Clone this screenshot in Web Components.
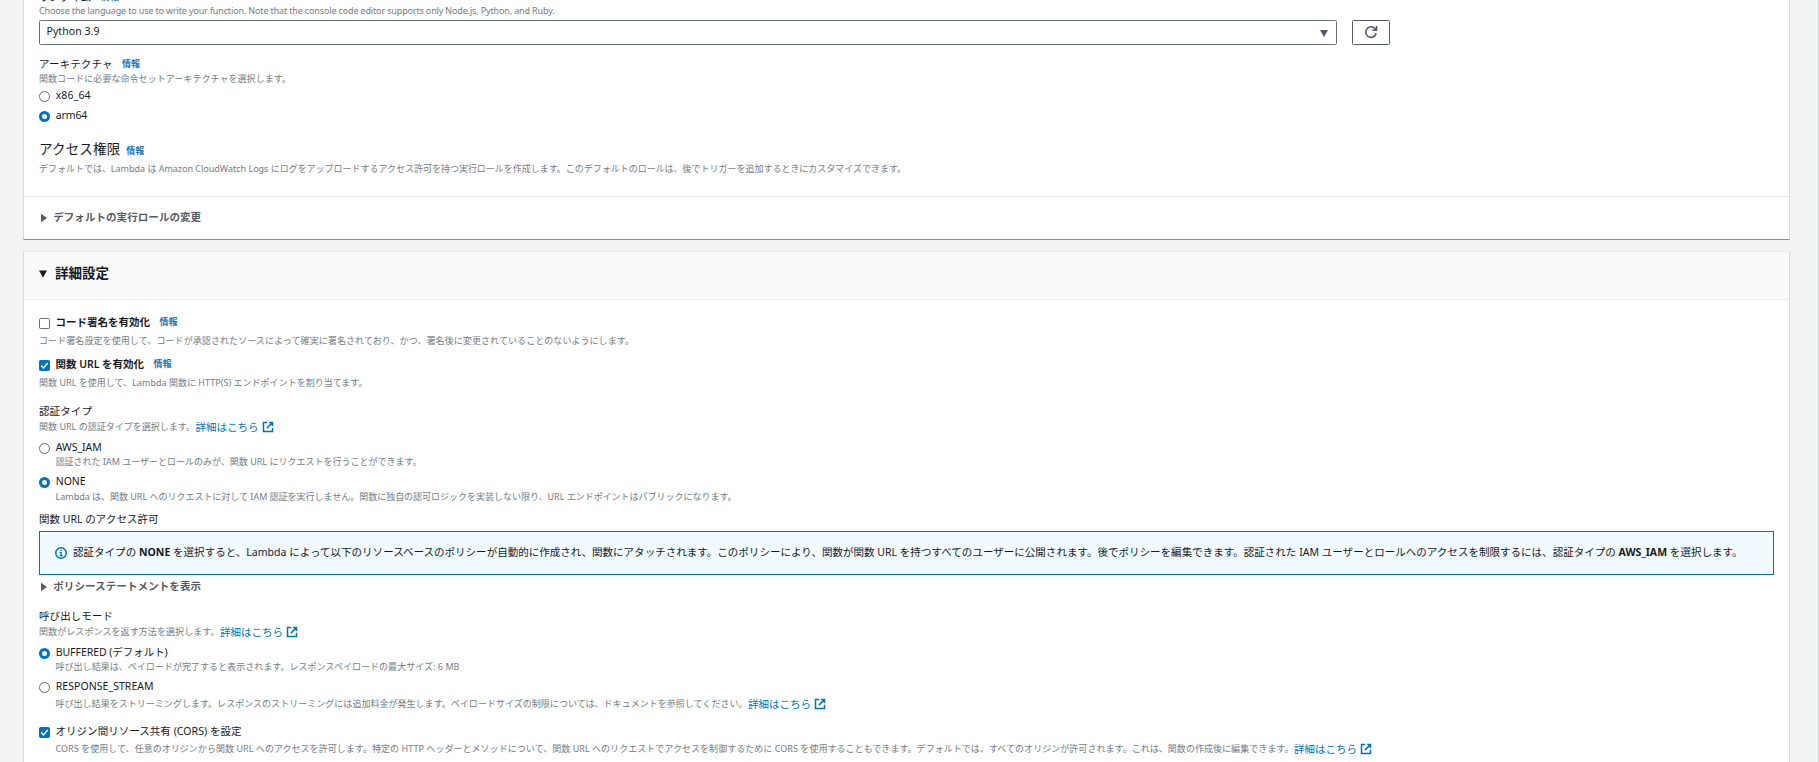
<!DOCTYPE html>
<html lang="ja">
<head>
<meta charset="utf-8">
<title>関数の作成</title>
<style>
html,body{margin:0;padding:0;height:100%;overflow:hidden}
body{background:#f2f3f3;font-family:"Noto Sans","Noto Sans CJK JP",sans-serif;font-size:10.5px;line-height:14px;color:#16191f}
b{font-weight:700}
</style>
</head>
<body>
<lambda-form></lambda-form>
<script>
const define=(name,html,setup)=>customElements.define(name,class extends HTMLElement{
  constructor(){super();this.attachShadow({mode:'open'}).innerHTML=html;}
  connectedCallback(){if(setup)setup.call(this,this.shadowRoot);}
});

/* One line of text, tracked so that it fills the width given in "w". */
define('text-run',`<style>
:host{display:block;white-space:nowrap;flex:none}
:host([kind=hint]){font-size:9px;color:#747c84}
:host([kind=title]){font-size:13.5px}
:host([kind=bold]){font-weight:600}
span{display:inline-block}
</style><span><slot></slot></span>`,function(root){
  const w=parseFloat(this.getAttribute('w'));
  if(!w)return;
  const n=[...this.textContent].length,s=root.querySelector('span');
  s.style.letterSpacing=(w-s.getBoundingClientRect().width)/n+'px';
  this.style.width=w+'px';
});

define('form-row',`<style>
:host{display:flex;align-items:center;height:14px;flex:none}
</style><slot></slot>`,function(){
  this.style.marginTop=(this.getAttribute('gap')||0)+'px';
  this.style.paddingLeft=(this.getAttribute('indent')||0)+'px';
});

define('info-link',`<style>
:host{display:block;margin-left:9.5px;font-size:9px;font-weight:700;color:#2a71b8;white-space:nowrap}
:host([near]){margin-left:6px;padding-top:3px}
</style><slot>情報</slot>`);

define('more-link',`<style>
:host{display:flex;align-items:center;color:#0073bb;margin-left:.5px;white-space:nowrap;flex:none}
svg{margin-left:3px;display:block}
</style><slot>詳細はこちら</slot>
<svg width="12" height="12" viewBox="0 0 16 16" fill="none" stroke="#0073bb" stroke-width="2"><path d="M7 2H2v12h12V9M9.5 2H14v4.5M14 2 6.5 9.5"/></svg>`);

define('radio-dot',`<style>
:host{display:block;box-sizing:border-box;width:11px;height:11px;border:1px solid #687078;border-radius:50%;background:#fff;margin:2px 5.7px 0 0;flex:none}
:host([on]){border:3.6px solid #0073bb}
</style>`);

define('check-box',`<style>
:host{display:block;box-sizing:border-box;width:11px;height:11px;border:1px solid #687078;border-radius:1.5px;background:#fff;margin:2px 5.5px 0 0;flex:none}
:host([on]){border-color:#0073bb;background:#0073bb}
svg{display:none}
:host([on]) svg{display:block}
</style><svg width="9" height="9" viewBox="0 0 9 9" fill="none" stroke="#fff" stroke-width="1.5"><path d="M1.2 4.6 3.5 7 7.7 2"/></svg>`);

define('toggle-arrow',`<style>
:host{display:block;width:14.2px;flex:none}
svg{display:block;position:relative;top:1px}
</style><svg width="10" height="10" viewBox="0 0 10 10"><path fill="#545b64" d="M2 .8 8 5 2 9.2z"/></svg>`);

define('select-box',`<style>
:host{display:flex;align-items:center;justify-content:space-between;box-sizing:border-box;width:1298px;height:25px;border:1px solid #687078;border-radius:1.5px;padding:0 8px 3px 6.5px;background:#fff}
svg{display:block;position:relative;top:2px}
</style><slot></slot><svg width="8" height="7" viewBox="0 0 8 7"><path fill="#545b64" d="M0 0h8L4 7z"/></svg>`);

define('refresh-button',`<style>
:host{display:flex;align-items:center;justify-content:center;box-sizing:border-box;width:38px;height:25px;padding-bottom:1px;border:1px solid #545b64;border-radius:1.5px;margin-left:15px}
</style><svg width="14" height="14" viewBox="0 0 16 16" fill="none" stroke="#545b64" stroke-width="1.8"><path d="M13.9 9.3A6 6 0 1 1 12.6 4.2L14 5.6M14.3 1v5H9.5"/></svg>`);

define('info-alert',`<style>
:host{display:flex;align-items:center;box-sizing:border-box;width:1735px;height:44px;border:1px solid #0073bb;background:#f1faff;padding:0 0 2px 15px;margin-top:5px;flex:none}
svg{display:block;margin-right:6px;position:relative;top:1px}
</style><svg width="12" height="12" viewBox="0 0 16 16" fill="none" stroke="#0073bb" stroke-width="2"><circle cx="8" cy="8" r="7"/><path stroke-width="1.8" d="M6.2 7.4h2v4M6 11.5h4.4M7.2 4.7h1.8"/></svg><slot></slot>`);

define('form-panel',`<style>
:host{display:flex;flex-direction:column;box-sizing:border-box;background:#fff;border:1px solid #d5dbdb;border-top-color:#eaeded;border-bottom-color:#879596;flex:none}
:host([first]){height:240px;border-top:0}
:host([rest]){height:540px;margin-top:11px}
.body{display:flex;flex-direction:column;padding-left:15px}
</style><slot name="head"></slot><div class="body"><slot></slot></div><slot name="foot"></slot>`);

define('panel-head',`<style>
:host{display:flex;align-items:center;box-sizing:border-box;padding:0 0 6px 15px;background:#fafafa;border-bottom:1px solid #eaeded;flex:none;height:48px}
svg{display:block;margin-right:7px;position:relative;top:1px}
</style><svg width="9" height="8" viewBox="0 0 9 8"><path fill="#16191f" d="M0 .5h8L4 7.5z"/></svg><slot></slot>`);

define('panel-foot',`<style>
:host{display:flex;align-items:center;box-sizing:border-box;height:43px;margin-top:20px;padding:0 0 2px 15px;border-top:1px solid #eaeded;color:#545b64}
</style><toggle-arrow></toggle-arrow><slot></slot>`);

define('lambda-form',`<style>
:host{display:flex;flex-direction:column;box-sizing:border-box;height:762px;overflow:hidden;padding:0 28px 0 23px;border-right:1px solid #d0d4d4}
.line{display:flex;margin-top:2px}
.mid{color:#545b64}
</style>
<form-panel first>
  <form-row gap="-10"><text-run>ランタイム</text-run><info-link></info-link></form-row>
  <form-row><text-run kind="hint" w="515.5">Choose the language to use to write your function. Note that the console code editor supports only Node.js, Python, and Ruby.</text-run></form-row>
  <div class="line"><select-box><text-run w="53">Python 3.9</text-run></select-box><refresh-button></refresh-button></div>
  <form-row gap="12"><text-run w="73.5">アーキテクチャ</text-run><info-link></info-link></form-row>
  <form-row gap="1"><text-run kind="hint" w="252">関数コードに必要な命令セットアーキテクチャを選択します。</text-run></form-row>
  <form-row gap="2"><radio-dot></radio-dot><text-run w="35">x86_64</text-run></form-row>
  <form-row gap="6"><radio-dot on></radio-dot><text-run w="31.5">arm64</text-run></form-row>
  <form-row gap="20"><text-run kind="title" w="81.3">アクセス権限</text-run><info-link near></info-link></form-row>
  <form-row gap="6"><text-run kind="hint" w="867">デフォルトでは、Lambda は Amazon CloudWatch Logs にログをアップロードするアクセス許可を持つ実行ロールを作成します。このデフォルトのロールは、後でトリガーを追加するときにカスタマイズできます。</text-run></form-row>
  <panel-foot slot="foot"><text-run kind="bold" w="148">デフォルトの実行ロールの変更</text-run></panel-foot>
</form-panel>
<form-panel rest>
  <panel-head slot="head"><text-run kind="title"><b>詳細設定</b></text-run></panel-head>
  <form-row gap="15"><check-box></check-box><text-run kind="bold" w="94.5">コード署名を有効化</text-run><info-link></info-link></form-row>
  <form-row gap="5"><text-run kind="hint" w="595">コード署名設定を使用して、コードが承認されたソースによって確実に署名されており、かつ、署名後に変更されていることのないようにします。</text-run></form-row>
  <form-row gap="9"><check-box on></check-box><text-run kind="bold" w="88.5">関数 URL を有効化</text-run><info-link></info-link></form-row>
  <form-row gap="5"><text-run kind="hint" w="328.5">関数 URL を使用して、Lambda 関数に HTTP(S) エンドポイントを割り当てます。</text-run></form-row>
  <form-row gap="14"><text-run w="53">認証タイプ</text-run></form-row>
  <form-row gap="2"><text-run kind="hint" w="156">関数 URL の認証タイプを選択します。</text-run><more-link></more-link></form-row>
  <form-row gap="6"><radio-dot></radio-dot><text-run w="46">AWS_IAM</text-run></form-row>
  <form-row gap="1" indent="16.5"><text-run kind="hint" w="366">認証された IAM ユーザーとロールのみが、関数 URL にリクエストを行うことができます。</text-run></form-row>
  <form-row gap="5"><radio-dot on></radio-dot><text-run w="30">NONE</text-run></form-row>
  <form-row gap="2" indent="16.5"><text-run kind="hint" w="681">Lambda は、関数 URL へのリクエストに対して IAM 認証を実行しません。関数に独自の認可ロジックを実装しない限り、URL エンドポイントはパブリックになります。</text-run></form-row>
  <form-row gap="8"><text-run w="119.5">関数 URL のアクセス許可</text-run></form-row>
  <info-alert><text-run w="1669.5">認証タイプの <b>NONE</b> を選択すると、Lambda によって以下のリソースベースのポリシーが自動的に作成され、関数にアタッチされます。このポリシーにより、関数が関数 URL を持つすべてのユーザーに公開されます。後でポリシーを編集できます。認証された IAM ユーザーとロールへのアクセスを制限するには、認証タイプの <b>AWS_IAM</b> を選択します。</text-run></info-alert>
  <form-row gap="4" class="mid"><toggle-arrow></toggle-arrow><text-run kind="bold" w="148">ポリシーステートメントを表示</text-run></form-row>
  <form-row gap="16"><text-run w="74">呼び出しモード</text-run></form-row>
  <form-row gap="2"><text-run kind="hint" w="180.6">関数がレスポンスを返す方法を選択します。</text-run><more-link></more-link></form-row>
  <form-row gap="6"><radio-dot on></radio-dot><text-run w="112">BUFFERED (デフォルト)</text-run></form-row>
  <form-row gap="1" indent="16.5"><text-run kind="hint" w="404">呼び出し結果は、ペイロードが完了すると表示されます。レスポンスペイロードの最大サイズ: 6 MB</text-run></form-row>
  <form-row gap="5"><radio-dot></radio-dot><text-run w="98">RESPONSE_STREAM</text-run></form-row>
  <form-row gap="4" indent="16.5"><text-run kind="hint" w="692">呼び出し結果をストリーミングします。レスポンスのストリーミングには追加料金が発生します。ペイロードサイズの制限については、ドキュメントを参照してください。</text-run><more-link></more-link></form-row>
  <form-row gap="13"><check-box on></check-box><text-run w="186">オリジン間リソース共有 (CORS) を設定</text-run></form-row>
  <form-row gap="4" indent="16.5"><text-run kind="hint" w="1238">CORS を使用して、任意のオリジンから関数 URL へのアクセスを許可します。特定の HTTP ヘッダーとメソッドについて、関数 URL へのリクエストでアクセスを制御するために CORS を使用することもできます。デフォルトでは、すべてのオリジンが許可されます。これは、関数の作成後に編集できます。</text-run><more-link></more-link></form-row>
</form-panel>`);
</script>
</body>
</html>
